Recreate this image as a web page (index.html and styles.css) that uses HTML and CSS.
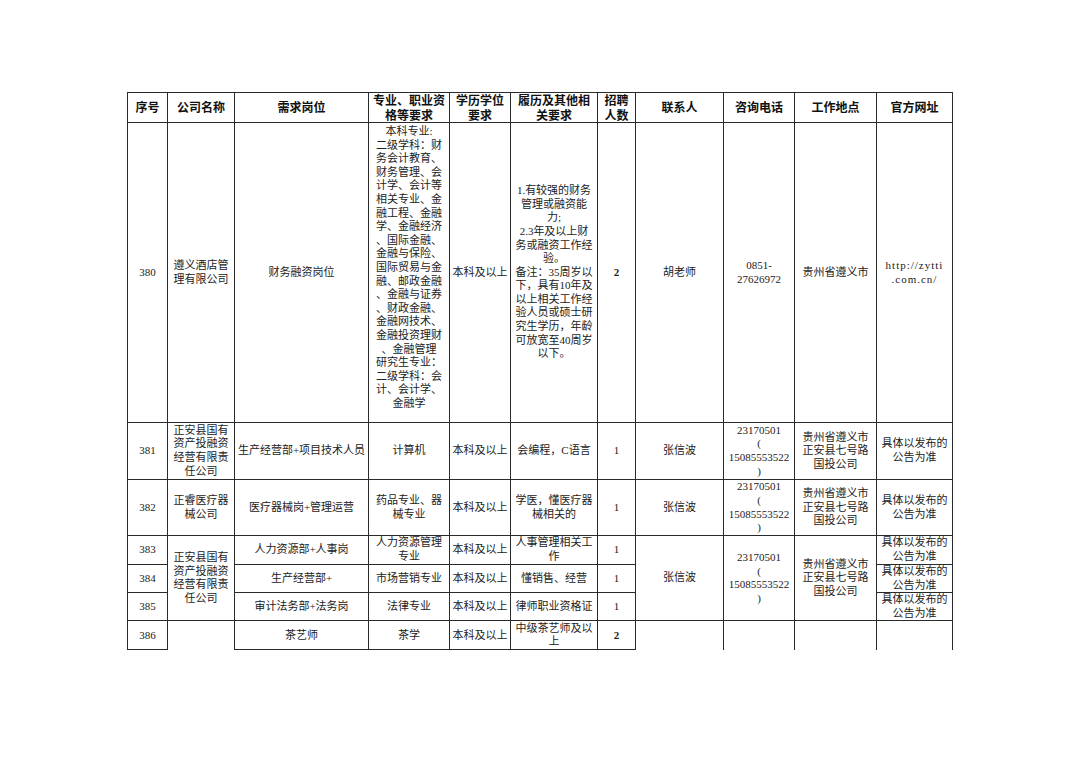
FILE: index.html
```html
<!DOCTYPE html>
<html lang="zh-CN">
<head>
<meta charset="utf-8">
<title>招聘岗位表</title>
<link rel="stylesheet" href="styles.css">
</head>
<body>
<div class="page">
<table class="jobs">
<colgroup>
<col class="c-no"><col class="c-co"><col class="c-pos"><col class="c-maj"><col class="c-edu"><col class="c-exp"><col class="c-num"><col class="c-ct"><col class="c-tel"><col class="c-loc"><col class="c-web">
</colgroup>
<thead>
<tr class="r-head">
<th>序号</th><th>公司名称</th><th>需求岗位</th><th>专业、职业资<br>格等要求</th><th>学历学位<br>要求</th><th>履历及其他相<br>关要求</th><th>招聘<br>人数</th><th>联系人</th><th>咨询电话</th><th>工作地点</th><th>官方网址</th>
</tr>
</thead>
<tbody>
<tr class="r-380">
<td>380</td>
<td>遵义酒店管<br>理有限公司</td>
<td>财务融资岗位</td>
<td class="top">本科专业:<br>二级学科：财<br>务会计教育、<br>财务管理、会<br>计学、会计等<br>相关专业、金<br>融工程、金融<br>学、金融经济<br>、国际金融、<br>金融与保险、<br>国际贸易与金<br>融、邮政金融<br>、金融与证券<br>、财政金融、<br>金融网技术、<br>金融投资理财<br>、金融管理<br>研究生专业：<br>二级学科：会<br>计、会计学、<br>金融学</td>
<td>本科及以上</td>
<td>1.有较强的财务<br>管理或融资能<br>力;<br>2.3年及以上财<br>务或融资工作经<br>验。<br>备注：35周岁以<br>下，具有10年及<br>以上相关工作经<br>验人员或硕士研<br>究生学历，年龄<br>可放宽至40周岁<br>以下。</td>
<td class="bold">2</td>
<td>胡老师</td>
<td>0851-<br>27626972</td>
<td>贵州省遵义市</td>
<td class="url">http://zytti<br>.com.cn/</td>
</tr>
<tr class="r-381">
<td>381</td>
<td>正安县国有<br>资产投融资<br>经营有限责<br>任公司</td>
<td>生产经营部+项目技术人员</td>
<td>计算机</td>
<td>本科及以上</td>
<td>会编程，C语言</td>
<td>1</td>
<td>张信波</td>
<td>23170501<br>(<br>15085553522<br>)</td>
<td>贵州省遵义市<br>正安县七号路<br>国投公司</td>
<td>具体以发布的<br>公告为准</td>
</tr>
<tr class="r-382">
<td>382</td>
<td>正睿医疗器<br>械公司</td>
<td>医疗器械岗+管理运营</td>
<td>药品专业、器<br>械专业</td>
<td>本科及以上</td>
<td>学医，懂医疗器<br>械相关的</td>
<td>1</td>
<td>张信波</td>
<td>23170501<br>(<br>15085553522<br>)</td>
<td>贵州省遵义市<br>正安县七号路<br>国投公司</td>
<td>具体以发布的<br>公告为准</td>
</tr>
<tr class="r-383">
<td>383</td>
<td rowspan="3">正安县国有<br>资产投融资<br>经营有限责<br>任公司</td>
<td>人力资源部+人事岗</td>
<td>人力资源管理<br>专业</td>
<td>本科及以上</td>
<td>人事管理相关工<br>作</td>
<td>1</td>
<td rowspan="3">张信波</td>
<td rowspan="3">23170501<br>(<br>15085553522<br>)</td>
<td rowspan="3">贵州省遵义市<br>正安县七号路<br>国投公司</td>
<td>具体以发布的<br>公告为准</td>
</tr>
<tr class="r-384">
<td>384</td>
<td>生产经营部+</td>
<td>市场营销专业</td>
<td>本科及以上</td>
<td>懂销售、经营</td>
<td>1</td>
<td>具体以发布的<br>公告为准</td>
</tr>
<tr class="r-385">
<td>385</td>
<td>审计法务部+法务岗</td>
<td>法律专业</td>
<td>本科及以上</td>
<td>律师职业资格证</td>
<td>1</td>
<td>具体以发布的<br>公告为准</td>
</tr>
<tr class="r-386">
<td>386</td>
<td class="open"></td>
<td>茶艺师</td>
<td>茶学</td>
<td>本科及以上</td>
<td>中级茶艺师及以<br>上</td>
<td class="bold">2</td>
<td class="open"></td>
<td class="open"></td>
<td class="open"></td>
<td class="open"></td>
</tr>
</tbody>
</table>
</div>
</body>
</html>
```
FILE: styles.css
```css
html, body {
  margin: 0;
  padding: 0;
  background: #ffffff;
}

.page {
  padding: 92px 0 0 127px;
}

.jobs {
  border-collapse: collapse;
  table-layout: fixed;
  width: 825px;
  font-family: "Liberation Serif", "Noto Sans CJK SC", serif;
  font-size: 11px;
  line-height: 13.6px;
  color: #222;
}

.c-no { width: 40px; }
.c-co { width: 67px; }
.c-pos { width: 134px; }
.c-maj { width: 81px; }
.c-edu { width: 61px; }
.c-exp { width: 87px; }
.c-num { width: 38px; }
.c-ct { width: 88px; }
.c-tel { width: 71px; }
.c-loc { width: 82px; }
.c-web { width: 76px; }

.jobs th,
.jobs td {
  border: 1px solid #2a2a2a;
  padding: 0 1px;
  text-align: center;
  vertical-align: middle;
  overflow: hidden;
  white-space: nowrap;
}

.jobs th {
  font-family: "Noto Sans CJK SC", sans-serif;
  font-weight: 700;
  font-size: 12px;
  line-height: 14.5px;
  color: #111;
}

.r-head { height: 30px; }
.r-380 { height: 300px; }
.r-381 { height: 57px; }
.r-382 { height: 56px; }
.r-383 { height: 29px; }
.r-384 { height: 28px; }
.r-385 { height: 28px; }
.r-386 { height: 29px; }

.jobs td.top {
  vertical-align: top;
  padding-top: 2px;
}

.jobs td.bold {
  font-weight: 700;
}

.jobs td.url {
  letter-spacing: 1px;
}

.jobs td.open {
  border-bottom: none;
}
```
